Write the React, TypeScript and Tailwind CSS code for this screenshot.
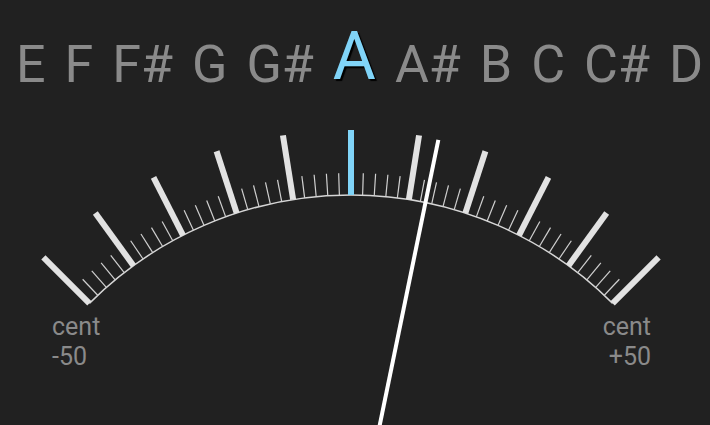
const notes = ["E", "F", "F#", "G", "G#", "A", "A#", "B", "C", "C#", "D"];
const active = "A";

// dial geometry, in page pixels
const cx = 351;
const cy = 565;
const radius = 370;
const degPerCent = 0.9;
const cents = 12.9;

function point(angleDeg: number, r: number) {
  const a = (angleDeg * Math.PI) / 180;
  return { x: cx + r * Math.sin(a), y: cy - r * Math.cos(a) };
}

function Dial() {
  const ticks = [];
  for (let c = -50; c <= 50; c += 2) {
    const major = c % 10 === 0;
    const angle = c * degPerCent;
    const p1 = point(angle, radius);
    const p2 = point(angle, radius + (major ? 65 : 22));
    ticks.push(
      <line
        key={c}
        x1={p1.x}
        y1={p1.y}
        x2={p2.x}
        y2={p2.y}
        stroke={c === 0 ? "#80d4f8" : major ? "#e2e2e2" : "#d0d0d0"}
        strokeWidth={major ? 6 : 1.2}
      />
    );
  }
  const start = point(-45, radius);
  const end = point(45, radius);
  const tip = point(cents * degPerCent, 434);

  return (
    <svg className="absolute inset-0" width={710} height={425} viewBox="0 0 710 425">
      <path
        d={`M ${start.x} ${start.y} A ${radius} ${radius} 0 0 1 ${end.x} ${end.y}`}
        fill="none"
        stroke="#d6d6d6"
        strokeWidth={1.5}
      />
      {ticks}
      <line x1={cx} y1={cy} x2={tip.x} y2={tip.y} stroke="#ffffff" strokeWidth={4} />
    </svg>
  );
}

export default function App() {
  return (
    <div className="relative w-[710px] h-[425px] overflow-hidden bg-[#212121] font-['Roboto',sans-serif] text-[#8a8a8a]">
      <Dial />

      {/* note strip */}
      <div className="relative flex items-baseline justify-center gap-[19px] whitespace-nowrap pl-[9px] pt-[27px]">
        {notes.map((n) =>
          n === active ? (
            <span
              key={n}
              className="relative -top-[3px] text-[66px] leading-none text-[#80d4f8] [text-shadow:2px_2px_1px_#000]"
            >
              {n}
            </span>
          ) : (
            <span key={n} className="text-[52px] leading-none">
              {n}
            </span>
          )
        )}
      </div>

      {/* range labels */}
      <div className="relative mt-[219px] flex justify-between pl-[52px] pr-[59px] text-[25px] leading-[30px]">
        <div>
          <div>cent</div>
          <div>-50</div>
        </div>
        <div className="text-right">
          <div>cent</div>
          <div>+50</div>
        </div>
      </div>
    </div>
  );
}
